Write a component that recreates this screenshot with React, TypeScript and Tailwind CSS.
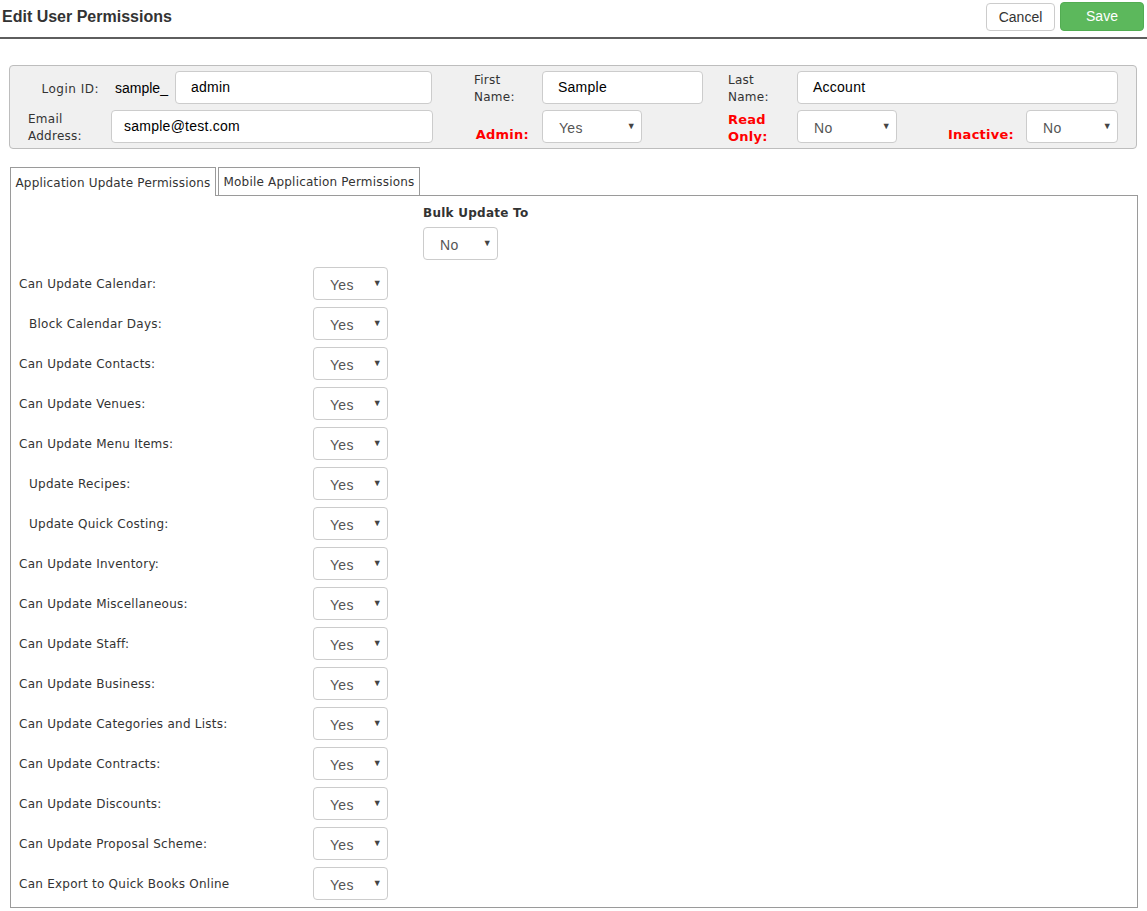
import React from 'react';

const rows: { label: string; indent?: boolean }[] = [
  { label: 'Can Update Calendar:' },
  { label: 'Block Calendar Days:', indent: true },
  { label: 'Can Update Contacts:' },
  { label: 'Can Update Venues:' },
  { label: 'Can Update Menu Items:' },
  { label: 'Update Recipes:', indent: true },
  { label: 'Update Quick Costing:', indent: true },
  { label: 'Can Update Inventory:' },
  { label: 'Can Update Miscellaneous:' },
  { label: 'Can Update Staff:' },
  { label: 'Can Update Business:' },
  { label: 'Can Update Categories and Lists:' },
  { label: 'Can Update Contracts:' },
  { label: 'Can Update Discounts:' },
  { label: 'Can Update Proposal Scheme:' },
  { label: 'Can Export to Quick Books Online' },
];

const FakeSelect = ({ value, width }: { value: string; width: string }) => (
  <div
    className={`${width} h-[33px] shrink-0 flex items-center justify-between pl-[16px] pr-[5px] bg-white border border-[#cccccc] rounded-[4px] font-['Liberation_Sans',Arial,sans-serif] text-[14px] tracking-[0.3px] text-[#555] leading-none pt-[2px]`}
  >
    <span>{value}</span>
    <span className="text-[9px] text-[#444] -mt-[2px]">▼</span>
  </div>
);

const TextBox = ({ value, width, pad = 'pl-[15px]' }: { value: string; width: string; pad?: string }) => (
  <div
    className={`${width} h-[33px] shrink-0 flex items-center ${pad} bg-white border border-[#cccccc] rounded-[4px] font-['Liberation_Sans',Arial,sans-serif] text-[14px] text-black`}
  >
    {value}
  </div>
);

export default function App() {
  return (
    <div className="w-[1147px] min-h-[911px] bg-white font-['DejaVu_Sans',Verdana,sans-serif] text-[12px] text-[#333] tracking-[0.25px]">
      {/* Header */}
      <div className="flex items-start justify-between h-[37px] pl-[2px] pr-[3px] pt-[2px]">
        <h1 className="font-['Liberation_Sans',Arial,sans-serif] font-bold text-[16px] tracking-normal text-[#333] leading-[28px] mt-[1px]">
          Edit User Permissions
        </h1>
        <div className="flex items-start gap-[5px] tracking-normal">
          <button className="mt-[1px] w-[69px] h-[28px] bg-white border border-[#cccccc] rounded-[4px] font-['Liberation_Sans',Arial,sans-serif] text-[14px] text-[#333]">
            Cancel
          </button>
          <button className="w-[84px] h-[29px] bg-[#5cb85c] border border-[#52ad52] rounded-[4px] font-['Liberation_Sans',Arial,sans-serif] text-[14px] text-white">
            Save
          </button>
        </div>
      </div>
      <div className="h-[2px] bg-[#5e5e5e]" />

      {/* User details panel */}
      <div className="mt-[26px] ml-[9px] w-[1128px] bg-[#f0f0f0] border border-[#bdbdbd] rounded-[4px] pt-[5px] pb-[5px] flex flex-col gap-[6px]">
        <div className="flex items-center h-[33px]">
          <div className="w-[89px] text-right tracking-[0.5px] pt-[2px]">Login ID:</div>
          <div className="ml-[16px] w-[60px] font-['Liberation_Sans',Arial,sans-serif] text-[14px] tracking-normal text-black pt-[2px]">sample_</div>
          <TextBox value="admin" width="w-[257px]" />
          <div className="ml-[42px] w-[68px] leading-[17px] pt-[2px]">
            First
            <br />
            Name:
          </div>
          <TextBox value="Sample" width="w-[161px]" />
          <div className="ml-[25px] w-[69px] leading-[17px] pt-[2px]">
            Last
            <br />
            Name:
          </div>
          <TextBox value="Account" width="w-[321px]" />
        </div>
        <div className="flex items-center h-[33px]">
          <div className="ml-[18px] w-[83px] leading-[17px] pt-[2px]">
            Email
            <br />
            Address:
          </div>
          <TextBox value="sample@test.com" width="w-[322px]" pad="pl-[12px]" />
          <div className="w-[97px] self-end text-right text-[#ff0000] font-bold text-[13px] leading-[17px] pr-[1px]">Admin:</div>
          <div className="ml-[12px]">
            <FakeSelect value="Yes" width="w-[100px]" />
          </div>
          <div className="ml-[86px] w-[69px] text-[#ff0000] font-bold text-[13px] leading-[17px] pt-[2px]">
            Read
            <br />
            Only:
          </div>
          <FakeSelect value="No" width="w-[100px]" />
          <div className="w-[129px] self-end text-right text-[#ff0000] font-bold text-[13px] leading-[17px] pr-[12px]">Inactive:</div>
          <FakeSelect value="No" width="w-[92px]" />
        </div>
      </div>

      {/* Tabs */}
      <div className="mt-[18px] ml-[10px] flex items-end gap-[2px]">
        <div className="relative z-10 -mb-px h-[29px] w-[206px] bg-white border-x border-t border-[#9a9a9a] flex items-center justify-center tracking-[0.2px] pt-[1px]">
          Application Update Permissions
        </div>
        <div className="relative z-10 -mb-px h-[29px] w-[202px] bg-white border border-[#9a9a9a] flex items-center justify-center tracking-[0.2px] pt-[1px]">
          Mobile Application Permissions
        </div>
      </div>
      <div className="ml-[10px] w-[1128px] border border-[#9a9a9a] pt-[8px] pb-[7px] pl-[8px]">
        <div className="ml-[404px]">
          <div className="font-bold leading-[15px] pt-[2px]">Bulk Update To</div>
          <div className="mt-[6px]">
            <FakeSelect value="No" width="w-[75px]" />
          </div>
        </div>
        <div className="mt-[7px] flex flex-col gap-[7px]">
          {rows.map((r) => (
            <div key={r.label} className="flex items-center h-[33px]">
              <div className={`w-[294px] pt-[1px] ${r.indent ? 'pl-[10px]' : ''}`}>{r.label}</div>
              <FakeSelect value="Yes" width="w-[75px]" />
            </div>
          ))}
        </div>
      </div>
    </div>
  );
}
